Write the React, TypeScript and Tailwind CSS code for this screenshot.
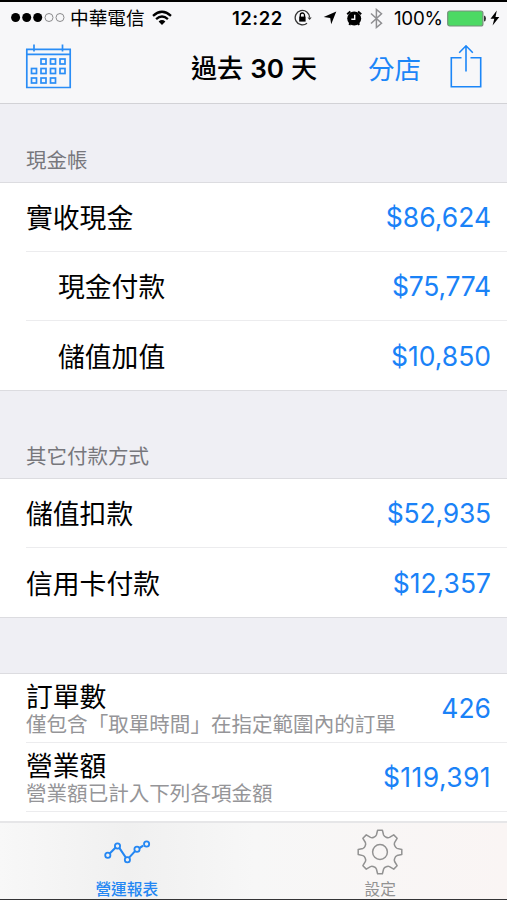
import type { ReactNode } from 'react';

function rotate(x: number, y: number, turn: number) {
  const a = (turn * Math.PI) / 4;
  const c = Math.cos(a);
  const s = Math.sin(a);
  return `${(x * c - y * s).toFixed(2)} ${(x * s + y * c).toFixed(2)}`;
}

const gearPath =
  Array.from({ length: 8 }, (_, i) => {
    const p = (x: number, y: number) => rotate(x, y, i);
    return `${i === 0 ? 'M' : 'L'}${p(-2.4, -21.8)}L${p(2.4, -21.8)}L${p(3.6, -17)}Q${p(4.2, -15.5)} ${p(6.1, -14.8)}Q${p(7.98, -13.94)} ${p(9.5, -14.6)}`;
  }).join('') + 'Z';

const dayCells = [
  [18, 17], [27.5, 17], [37, 17],
  [8.5, 26.5], [18, 26.5], [27.5, 26.5], [37, 26.5],
  [8.5, 36], [18, 36], [27.5, 36],
];

function CalendarIcon() {
  return (
    <svg width="51" height="48" viewBox="0 0 51 48" fill="none" stroke="#2a8df6" strokeWidth="1.7">
      <path d="M3.8 7.3H47.2V45.5H3.8ZM3.8 12.3H47.2M11 2.5V9.5M39.5 2.5V9.5" />
      {dayCells.map(([x, y]) => (
        <rect key={`${x}-${y}`} x={x} y={y} width="5" height="5" />
      ))}
    </svg>
  );
}

function ShareIcon() {
  return (
    <svg width="34" height="46" viewBox="0 0 34 46" fill="none" stroke="#1b86f8" strokeWidth="1.6">
      <path d="M12.5 14.8H2.3V43.7H31.7V14.8H21.5M17 28.5V3M10.2 9.7L17 2.8L23.8 9.7" />
    </svg>
  );
}

function StatusBar() {
  return (
    <div className="flex h-[32px] items-center pl-[11px] text-black">
      <svg width="54" height="12" viewBox="0 0 54 12">
        <circle cx="4.6" cy="5.5" r="4.5" />
        <circle cx="15.7" cy="5.5" r="4.5" />
        <circle cx="26.7" cy="5.5" r="4.5" />
        <circle cx="38" cy="5.5" r="4" fill="none" stroke="#8b8b8d" />
        <circle cx="49" cy="5.5" r="4" fill="none" stroke="#8b8b8d" />
      </svg>
      <span className="ml-[5px] w-[82px] pt-px text-[18.7px] leading-[30px]">中華電信</span>
      <svg width="20" height="16" viewBox="0 0 20 16" fill="none" stroke="black" strokeWidth="2.3">
        <path d="M1 5.8Q10 -2.2 19 5.8M4.1 9.2Q10 3.9 15.9 9.2" />
        <path d="M6.6 11.4Q10 8.6 13.4 11.4L10 15Z" fill="black" stroke="none" />
      </svg>
      <span className="ml-[60px] w-[62px] text-[18.5px] font-semibold leading-[30px] tracking-[0.5px]">12:22</span>
      <svg width="19" height="18" viewBox="0 0 19 18" fill="none" stroke="#333" strokeWidth="1.3">
        <path d="M13 14.2A7.2 7.2 0 1 1 15.6 8.6" />
        <path d="M13.5 8.4H17.7L15.6 11Z" fill="#333" stroke="none" />
        <rect x="5.2" y="7.6" width="6.4" height="5" fill="black" stroke="none" />
        <path d="M6.3 8V6.1A2.1 2.1 0 0 1 10.5 6.1V8" stroke="black" />
      </svg>
      <svg className="ml-[10px]" width="14" height="14" viewBox="0 0 14 14">
        <path d="M13.3 0.6L8.2 13.3L7.2 7.1L0.7 6.1Z" />
      </svg>
      <svg className="ml-[9px]" width="17" height="17" viewBox="0 0 17 17">
        <circle cx="8.2" cy="8.6" r="7" />
        <path d="M1.2 4.3L4.4 1.4M15.2 4.3L12 1.4M4.3 13L3.4 15M12.1 13L13 15" stroke="black" strokeWidth="2" />
        <path d="M8.7 4.8V9.3H5.3" fill="none" stroke="#f7f7f9" strokeWidth="1.4" />
      </svg>
      <svg className="ml-[7px]" width="13" height="21" viewBox="0 0 13 21" fill="none" stroke="#8f8f92" strokeWidth="1.5">
        <path d="M1 5.5L11.5 15.2L6.4 19.5V1.5L11.5 5.8L1 15.5" />
      </svg>
      <span className="ml-[11px] w-[53px] pt-px text-[18.8px] leading-[30px] tracking-[-0.3px]">100%</span>
      <svg width="39" height="17" viewBox="0 0 39 17">
        <rect x="0.7" y="1" width="35.2" height="15" rx="2" fill="#4cd964" stroke="#77907c" strokeWidth="1.2" />
        <path d="M37 5.5Q39 6 39 8.5T37 11.5Z" fill="#333" />
      </svg>
      <svg className="ml-[4px]" width="10" height="16" viewBox="0 0 10 16">
        <path d="M6.8 0.5L0.5 8.8H4.3L2.6 15.5L9.3 6.9H5.5Z" />
      </svg>
    </div>
  );
}

function SectionHeader({ children, size }: { children?: ReactNode; size: string }) {
  return (
    <div className={`flex shrink-0 items-end border-b border-[#dcdce0] bg-[#efeff4] pl-[26px] text-[20.5px] leading-[30px] text-[#77777c] ${size}`}>
      {children}
    </div>
  );
}

function Row({ label, value, note, indent, last, spacing = '' }: { label: string; value: string; note?: string; indent?: boolean; last?: boolean; spacing?: string }) {
  return (
    <div className="h-[69px] shrink-0 bg-white pl-[26px]">
      <div className={`flex h-full items-center justify-between pr-[16px] ${last ? '' : 'border-b border-[#ececee]'} ${indent ? 'pl-[32px]' : ''}`}>
        <div>
          <div className={`text-[26.8px] text-black ${note ? 'pt-[3px] leading-[31px]' : 'pt-[2px] leading-[40px]'}`}>{label}</div>
          {note && <div className="whitespace-nowrap text-[20.55px] leading-[24px] text-[#959598]">{note}</div>}
        </div>
        <div className={`text-[26.5px] leading-[40px] text-[#1a82f7] ${spacing}`}>{value}</div>
      </div>
    </div>
  );
}

export default function App() {
  return (
    <div className="flex h-[900px] w-[507px] flex-col overflow-hidden border-t-2 border-black bg-white font-[Inter,'Noto_Sans_CJK_TC',sans-serif]">
      <header className="h-[102px] shrink-0 border-b border-[#d2d2d6] bg-[#f7f7f9]">
        <StatusBar />
        <div className="flex h-[69px] items-center">
          <div className="ml-[23px] w-[168px] pb-[5px]"><CalendarIcon /></div>
          <h1 className="w-[177px] whitespace-nowrap text-[26.1px] font-medium leading-[40px]">
            過去 <span className="font-semibold">30</span> 天
          </h1>
          <span className="w-[81px] text-[26.5px] leading-[40px] text-[#1b86f8]">分店</span>
          <div className="pb-[5px]"><ShareIcon /></div>
        </div>
      </header>

      <main className="flex min-h-0 flex-1 flex-col overflow-hidden">
        <SectionHeader size="h-[79px] pb-[6px]">現金帳</SectionHeader>
        <Row label="實收現金" value="$86,624" />
        <Row label="現金付款" value="$75,774" indent spacing="tracking-[-0.2px]" />
        <Row label="儲值加值" value="$10,850" indent last />
        <SectionHeader size="h-[89px] border-t pb-[6px]">其它付款方式</SectionHeader>
        <Row label="儲值扣款" value="$52,935" spacing="tracking-[-0.2px]" />
        <Row label="信用卡付款" value="$12,357" last />
        <SectionHeader size="h-[57px] border-t" />
        <Row label="訂單數" note="僅包含「取單時間」在指定範圍內的訂單" value="426" />
        <Row label="營業額" note="營業額已計入下列各項金額" value="$119,391" spacing="tracking-[0.4px]" />
      </main>

      <nav className="grid h-[79px] shrink-0 grid-cols-2 border-t-2 border-b border-t-[#e6e6e8] border-b-[#343436] bg-linear-to-r from-[#f8f8f8] via-[#f7f7f7] to-[#faf5f4]">
        <div className="flex flex-col items-center bg-linear-to-r from-[#f8f8f8] via-[#f0f0f0] to-[#f7f7f7] pt-[5px] text-[#2487f3]">
          <svg width="48" height="48" viewBox="0 0 48 48" fill="none" stroke="currentColor" strokeWidth="1.8">
            <path d="M6.7 25.4L12.9 19.3M16.3 19.8L22.8 29.5M26.1 29.6L32.3 22.9M36.5 20L40.2 17.7" strokeWidth="2.1" />
            {[[4.8, 27.2], [14.5, 18], [24.4, 31.8], [34, 21.2], [43.6, 16]].map(([x, y]) => (
              <circle key={x} cx={x} cy={y} r="2.6" />
            ))}
          </svg>
          <span className="pt-[5px] text-[15.7px] font-medium leading-[18px]">營運報表</span>
        </div>
        <div className="flex flex-col items-center pt-[5px] text-[#929292]">
          <svg width="48" height="48" viewBox="-24 -24 48 48" fill="none" stroke="currentColor" strokeWidth="1.5" strokeLinejoin="round">
            <path d={gearPath} />
            <circle r="7.4" />
          </svg>
          <span className="pt-[5px] text-[15.7px] leading-[18px]">設定</span>
        </div>
      </nav>
    </div>
  );
}
